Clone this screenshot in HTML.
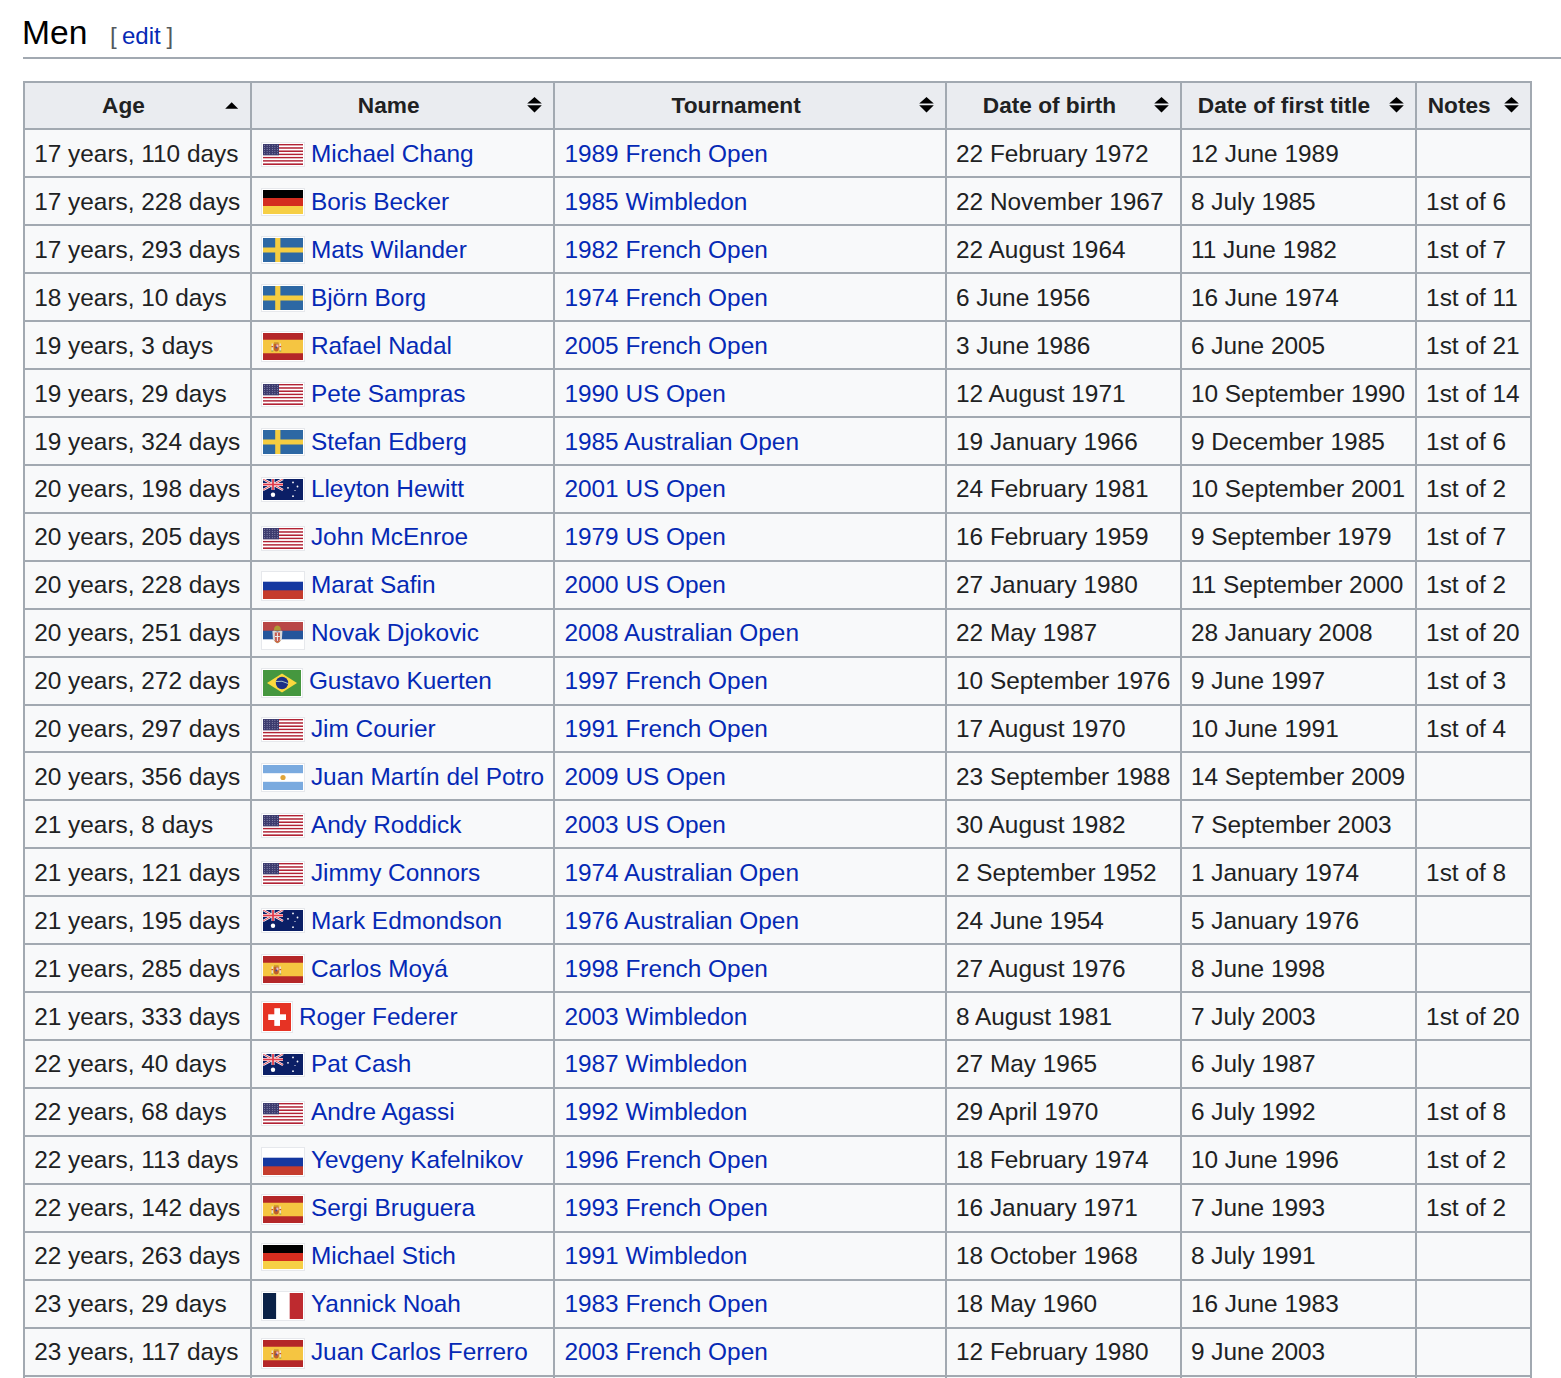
<!DOCTYPE html>
<html><head><meta charset="utf-8"><title>Men</title>
<style>
html,body{margin:0;padding:0;background:#fff;}
body{width:1561px;height:1378px;overflow:hidden;position:relative;-webkit-font-smoothing:antialiased;font-family:"Liberation Sans",sans-serif;color:#202122;}
.a{position:absolute;white-space:nowrap;}
.t{position:absolute;white-space:nowrap;font-size:24.4px;line-height:30px;color:#202122;}
.l{color:#0529b5;}
.h{position:absolute;white-space:nowrap;font-size:22.65px;line-height:30px;font-weight:bold;color:#202122;}
.bd{position:absolute;background:#a2a9b1;}
.fl{position:absolute;box-shadow:0 0 0 1px #fff,0 0 0 2px #e6e8ec;}
.fl svg{display:block;}
</style></head><body>

<div class="a" style="left:22px;top:13px;font-size:33.6px;line-height:40px;color:#000">Men</div>
<div class="a" style="left:110px;top:21px;font-size:24px;line-height:30px;color:#54595d">[</div>
<div class="a" style="left:122px;top:21px;font-size:24px;line-height:30px;color:#0529b5">edit</div>
<div class="a" style="left:166.5px;top:21px;font-size:24px;line-height:30px;color:#54595d">]</div>
<div class="bd" style="left:23px;top:57px;width:1538px;height:2px"></div>
<div class="a" style="left:23px;top:80.5px;width:1508.5px;height:47.5px;background:#eaecf0"></div>
<div class="a" style="left:23px;top:128px;width:1508.5px;height:1250px;background:#f8f9fa"></div>
<div class="bd" style="left:23px;top:80.5px;width:1508.5px;height:2px"></div>
<div class="bd" style="left:23px;top:128.00px;width:1508.5px;height:2px"></div>
<div class="bd" style="left:23px;top:175.96px;width:1508.5px;height:2px"></div>
<div class="bd" style="left:23px;top:223.92px;width:1508.5px;height:2px"></div>
<div class="bd" style="left:23px;top:271.88px;width:1508.5px;height:2px"></div>
<div class="bd" style="left:23px;top:319.84px;width:1508.5px;height:2px"></div>
<div class="bd" style="left:23px;top:367.80px;width:1508.5px;height:2px"></div>
<div class="bd" style="left:23px;top:415.76px;width:1508.5px;height:2px"></div>
<div class="bd" style="left:23px;top:463.72px;width:1508.5px;height:2px"></div>
<div class="bd" style="left:23px;top:511.68px;width:1508.5px;height:2px"></div>
<div class="bd" style="left:23px;top:559.64px;width:1508.5px;height:2px"></div>
<div class="bd" style="left:23px;top:607.60px;width:1508.5px;height:2px"></div>
<div class="bd" style="left:23px;top:655.56px;width:1508.5px;height:2px"></div>
<div class="bd" style="left:23px;top:703.52px;width:1508.5px;height:2px"></div>
<div class="bd" style="left:23px;top:751.48px;width:1508.5px;height:2px"></div>
<div class="bd" style="left:23px;top:799.44px;width:1508.5px;height:2px"></div>
<div class="bd" style="left:23px;top:847.40px;width:1508.5px;height:2px"></div>
<div class="bd" style="left:23px;top:895.36px;width:1508.5px;height:2px"></div>
<div class="bd" style="left:23px;top:943.32px;width:1508.5px;height:2px"></div>
<div class="bd" style="left:23px;top:991.28px;width:1508.5px;height:2px"></div>
<div class="bd" style="left:23px;top:1039.24px;width:1508.5px;height:2px"></div>
<div class="bd" style="left:23px;top:1087.20px;width:1508.5px;height:2px"></div>
<div class="bd" style="left:23px;top:1135.16px;width:1508.5px;height:2px"></div>
<div class="bd" style="left:23px;top:1183.12px;width:1508.5px;height:2px"></div>
<div class="bd" style="left:23px;top:1231.08px;width:1508.5px;height:2px"></div>
<div class="bd" style="left:23px;top:1279.04px;width:1508.5px;height:2px"></div>
<div class="bd" style="left:23px;top:1327.00px;width:1508.5px;height:2px"></div>
<div class="bd" style="left:23px;top:1374.96px;width:1508.5px;height:2px"></div>
<div class="bd" style="left:23px;top:80.5px;width:2px;height:1297.5px"></div>
<div class="bd" style="left:250px;top:80.5px;width:2px;height:1297.5px"></div>
<div class="bd" style="left:553px;top:80.5px;width:2px;height:1297.5px"></div>
<div class="bd" style="left:945px;top:80.5px;width:2px;height:1297.5px"></div>
<div class="bd" style="left:1180px;top:80.5px;width:2px;height:1297.5px"></div>
<div class="bd" style="left:1415px;top:80.5px;width:2px;height:1297.5px"></div>
<div class="bd" style="left:1529.5px;top:80.5px;width:2px;height:1297.5px"></div>
<div class="h" style="left:-76.5px;top:90px;width:400px;text-align:center">Age</div>
<div class="h" style="left:188.7px;top:90px;width:400px;text-align:center">Name</div>
<div class="h" style="left:536.2px;top:90px;width:400px;text-align:center">Tournament</div>
<div class="h" style="left:849.5px;top:90px;width:400px;text-align:center">Date of birth</div>
<div class="h" style="left:1084.0px;top:90px;width:400px;text-align:center">Date of first title</div>
<div class="h" style="left:1259.2px;top:90px;width:400px;text-align:center">Notes</div>
<svg class="a" style="left:224.6px;top:101.5px" width="14" height="7" viewBox="0 0 14 7"><path d="M0.2,6.7 L6.7,0.3 L13.2,6.7z" fill="#000"/></svg>
<svg class="a" style="left:527.0px;top:97px" width="15" height="16" viewBox="0 0 15 16"><path d="M0.2,6.4 L7.5,0.1 L14.8,6.4z M0.2,8.3 L7.5,15.5 L14.8,8.3z" fill="#000"/></svg>
<svg class="a" style="left:919.0px;top:97px" width="15" height="16" viewBox="0 0 15 16"><path d="M0.2,6.4 L7.5,0.1 L14.8,6.4z M0.2,8.3 L7.5,15.5 L14.8,8.3z" fill="#000"/></svg>
<svg class="a" style="left:1154.0px;top:97px" width="15" height="16" viewBox="0 0 15 16"><path d="M0.2,6.4 L7.5,0.1 L14.8,6.4z M0.2,8.3 L7.5,15.5 L14.8,8.3z" fill="#000"/></svg>
<svg class="a" style="left:1389.0px;top:97px" width="15" height="16" viewBox="0 0 15 16"><path d="M0.2,6.4 L7.5,0.1 L14.8,6.4z M0.2,8.3 L7.5,15.5 L14.8,8.3z" fill="#000"/></svg>
<svg class="a" style="left:1503.5px;top:97px" width="15" height="16" viewBox="0 0 15 16"><path d="M0.2,6.4 L7.5,0.1 L14.8,6.4z M0.2,8.3 L7.5,15.5 L14.8,8.3z" fill="#000"/></svg>
<div class="t" style="left:34.2px;top:139.00px">17 years, 110 days</div>
<div class="fl" style="left:263px;top:143.90px;width:40px;height:21px"><svg width="40" height="21" viewBox="0 0 40 21"><rect x="0" y="0.000" width="40" height="1.635" fill="#b22234"/><rect x="0" y="1.615" width="40" height="1.635" fill="#fff"/><rect x="0" y="3.231" width="40" height="1.635" fill="#b22234"/><rect x="0" y="4.846" width="40" height="1.635" fill="#fff"/><rect x="0" y="6.462" width="40" height="1.635" fill="#b22234"/><rect x="0" y="8.077" width="40" height="1.635" fill="#fff"/><rect x="0" y="9.692" width="40" height="1.635" fill="#b22234"/><rect x="0" y="11.308" width="40" height="1.635" fill="#fff"/><rect x="0" y="12.923" width="40" height="1.635" fill="#b22234"/><rect x="0" y="14.538" width="40" height="1.635" fill="#fff"/><rect x="0" y="16.154" width="40" height="1.635" fill="#b22234"/><rect x="0" y="17.769" width="40" height="1.635" fill="#fff"/><rect x="0" y="19.385" width="40" height="1.635" fill="#b22234"/><rect x="0" y="0" width="16" height="11.308" fill="#3c3b6e"/><circle cx="1.50" cy="1.30" r="0.45" fill="#c8c8e0"/><circle cx="4.10" cy="1.30" r="0.45" fill="#c8c8e0"/><circle cx="6.70" cy="1.30" r="0.45" fill="#c8c8e0"/><circle cx="9.30" cy="1.30" r="0.45" fill="#c8c8e0"/><circle cx="11.90" cy="1.30" r="0.45" fill="#c8c8e0"/><circle cx="14.50" cy="1.30" r="0.45" fill="#c8c8e0"/><circle cx="1.50" cy="3.40" r="0.45" fill="#c8c8e0"/><circle cx="4.10" cy="3.40" r="0.45" fill="#c8c8e0"/><circle cx="6.70" cy="3.40" r="0.45" fill="#c8c8e0"/><circle cx="9.30" cy="3.40" r="0.45" fill="#c8c8e0"/><circle cx="11.90" cy="3.40" r="0.45" fill="#c8c8e0"/><circle cx="14.50" cy="3.40" r="0.45" fill="#c8c8e0"/><circle cx="1.50" cy="5.50" r="0.45" fill="#c8c8e0"/><circle cx="4.10" cy="5.50" r="0.45" fill="#c8c8e0"/><circle cx="6.70" cy="5.50" r="0.45" fill="#c8c8e0"/><circle cx="9.30" cy="5.50" r="0.45" fill="#c8c8e0"/><circle cx="11.90" cy="5.50" r="0.45" fill="#c8c8e0"/><circle cx="14.50" cy="5.50" r="0.45" fill="#c8c8e0"/><circle cx="1.50" cy="7.60" r="0.45" fill="#c8c8e0"/><circle cx="4.10" cy="7.60" r="0.45" fill="#c8c8e0"/><circle cx="6.70" cy="7.60" r="0.45" fill="#c8c8e0"/><circle cx="9.30" cy="7.60" r="0.45" fill="#c8c8e0"/><circle cx="11.90" cy="7.60" r="0.45" fill="#c8c8e0"/><circle cx="14.50" cy="7.60" r="0.45" fill="#c8c8e0"/><circle cx="1.50" cy="9.70" r="0.45" fill="#c8c8e0"/><circle cx="4.10" cy="9.70" r="0.45" fill="#c8c8e0"/><circle cx="6.70" cy="9.70" r="0.45" fill="#c8c8e0"/><circle cx="9.30" cy="9.70" r="0.45" fill="#c8c8e0"/><circle cx="11.90" cy="9.70" r="0.45" fill="#c8c8e0"/><circle cx="14.50" cy="9.70" r="0.45" fill="#c8c8e0"/></svg></div>
<div class="t l" style="left:310.9px;top:139.00px">Michael Chang</div>
<div class="t l" style="left:564.4px;top:139.00px">1989 French Open</div>
<div class="t" style="left:956.0px;top:139.00px">22 February 1972</div>
<div class="t" style="left:1190.9px;top:139.00px">12 June 1989</div>
<div class="t" style="left:34.2px;top:186.92px">17 years, 228 days</div>
<div class="fl" style="left:263px;top:190.36px;width:40px;height:24px"><svg width="40" height="24" viewBox="0 0 40 24"><rect width="40" height="24" fill="#f6cf45"/><rect width="40" height="16" fill="#d42d1f"/><rect width="40" height="8" fill="#000"/></svg></div>
<div class="t l" style="left:310.9px;top:186.92px">Boris Becker</div>
<div class="t l" style="left:564.4px;top:186.92px">1985 Wimbledon</div>
<div class="t" style="left:956.0px;top:186.92px">22 November 1967</div>
<div class="t" style="left:1190.9px;top:186.92px">8 July 1985</div>
<div class="t" style="left:1426.1px;top:186.92px">1st of 6</div>
<div class="t" style="left:34.2px;top:234.84px">17 years, 293 days</div>
<div class="fl" style="left:263px;top:238.32px;width:40px;height:24px"><svg width="40" height="24" viewBox="0 0 40 24"><rect width="40" height="24" fill="#2d68a4"/><rect x="12.2" width="5.2" height="24" fill="#f5cd41"/><rect y="9.5" width="40" height="5" fill="#f5cd41"/></svg></div>
<div class="t l" style="left:310.9px;top:234.84px">Mats Wilander</div>
<div class="t l" style="left:564.4px;top:234.84px">1982 French Open</div>
<div class="t" style="left:956.0px;top:234.84px">22 August 1964</div>
<div class="t" style="left:1190.9px;top:234.84px">11 June 1982</div>
<div class="t" style="left:1426.1px;top:234.84px">1st of 7</div>
<div class="t" style="left:34.2px;top:282.76px">18 years, 10 days</div>
<div class="fl" style="left:263px;top:286.28px;width:40px;height:24px"><svg width="40" height="24" viewBox="0 0 40 24"><rect width="40" height="24" fill="#2d68a4"/><rect x="12.2" width="5.2" height="24" fill="#f5cd41"/><rect y="9.5" width="40" height="5" fill="#f5cd41"/></svg></div>
<div class="t l" style="left:310.9px;top:282.76px">Björn Borg</div>
<div class="t l" style="left:564.4px;top:282.76px">1974 French Open</div>
<div class="t" style="left:956.0px;top:282.76px">6 June 1956</div>
<div class="t" style="left:1190.9px;top:282.76px">16 June 1974</div>
<div class="t" style="left:1426.1px;top:282.76px">1st of 11</div>
<div class="t" style="left:34.2px;top:330.68px">19 years, 3 days</div>
<div class="fl" style="left:263px;top:332.74px;width:40px;height:27px"><svg width="40" height="27" viewBox="0 0 40 27"><rect width="40" height="27" fill="#b42628"/><rect y="6.75" width="40" height="13.5" fill="#f5c541"/><rect x="8.6" y="10.5" width="1.4" height="7.5" fill="#e8e0d0"/><rect x="8.3" y="17.5" width="2" height="1" fill="#8a9a40"/><rect x="16.6" y="10.5" width="1.4" height="7.5" fill="#e8e0d0"/><rect x="16.3" y="17.5" width="2" height="1" fill="#8a9a40"/><rect x="8.4" y="13" width="1.8" height="1.2" fill="#c85030"/><rect x="16.4" y="13" width="1.8" height="1.2" fill="#c85030"/><path d="M10.8,10.8 h5 v4.8 q0,3 -2.5,3 q-2.5,0 -2.5,-3z" fill="#c0602a"/><rect x="13.3" y="11.5" width="2.2" height="2.8" fill="#e8b8c8"/><circle cx="13.3" cy="14.6" r="1" fill="#4a4a8a"/><rect x="11" y="9.3" width="4.6" height="1.6" fill="#c89030"/></svg></div>
<div class="t l" style="left:310.9px;top:330.68px">Rafael Nadal</div>
<div class="t l" style="left:564.4px;top:330.68px">2005 French Open</div>
<div class="t" style="left:956.0px;top:330.68px">3 June 1986</div>
<div class="t" style="left:1190.9px;top:330.68px">6 June 2005</div>
<div class="t" style="left:1426.1px;top:330.68px">1st of 21</div>
<div class="t" style="left:34.2px;top:378.60px">19 years, 29 days</div>
<div class="fl" style="left:263px;top:383.70px;width:40px;height:21px"><svg width="40" height="21" viewBox="0 0 40 21"><rect x="0" y="0.000" width="40" height="1.635" fill="#b22234"/><rect x="0" y="1.615" width="40" height="1.635" fill="#fff"/><rect x="0" y="3.231" width="40" height="1.635" fill="#b22234"/><rect x="0" y="4.846" width="40" height="1.635" fill="#fff"/><rect x="0" y="6.462" width="40" height="1.635" fill="#b22234"/><rect x="0" y="8.077" width="40" height="1.635" fill="#fff"/><rect x="0" y="9.692" width="40" height="1.635" fill="#b22234"/><rect x="0" y="11.308" width="40" height="1.635" fill="#fff"/><rect x="0" y="12.923" width="40" height="1.635" fill="#b22234"/><rect x="0" y="14.538" width="40" height="1.635" fill="#fff"/><rect x="0" y="16.154" width="40" height="1.635" fill="#b22234"/><rect x="0" y="17.769" width="40" height="1.635" fill="#fff"/><rect x="0" y="19.385" width="40" height="1.635" fill="#b22234"/><rect x="0" y="0" width="16" height="11.308" fill="#3c3b6e"/><circle cx="1.50" cy="1.30" r="0.45" fill="#c8c8e0"/><circle cx="4.10" cy="1.30" r="0.45" fill="#c8c8e0"/><circle cx="6.70" cy="1.30" r="0.45" fill="#c8c8e0"/><circle cx="9.30" cy="1.30" r="0.45" fill="#c8c8e0"/><circle cx="11.90" cy="1.30" r="0.45" fill="#c8c8e0"/><circle cx="14.50" cy="1.30" r="0.45" fill="#c8c8e0"/><circle cx="1.50" cy="3.40" r="0.45" fill="#c8c8e0"/><circle cx="4.10" cy="3.40" r="0.45" fill="#c8c8e0"/><circle cx="6.70" cy="3.40" r="0.45" fill="#c8c8e0"/><circle cx="9.30" cy="3.40" r="0.45" fill="#c8c8e0"/><circle cx="11.90" cy="3.40" r="0.45" fill="#c8c8e0"/><circle cx="14.50" cy="3.40" r="0.45" fill="#c8c8e0"/><circle cx="1.50" cy="5.50" r="0.45" fill="#c8c8e0"/><circle cx="4.10" cy="5.50" r="0.45" fill="#c8c8e0"/><circle cx="6.70" cy="5.50" r="0.45" fill="#c8c8e0"/><circle cx="9.30" cy="5.50" r="0.45" fill="#c8c8e0"/><circle cx="11.90" cy="5.50" r="0.45" fill="#c8c8e0"/><circle cx="14.50" cy="5.50" r="0.45" fill="#c8c8e0"/><circle cx="1.50" cy="7.60" r="0.45" fill="#c8c8e0"/><circle cx="4.10" cy="7.60" r="0.45" fill="#c8c8e0"/><circle cx="6.70" cy="7.60" r="0.45" fill="#c8c8e0"/><circle cx="9.30" cy="7.60" r="0.45" fill="#c8c8e0"/><circle cx="11.90" cy="7.60" r="0.45" fill="#c8c8e0"/><circle cx="14.50" cy="7.60" r="0.45" fill="#c8c8e0"/><circle cx="1.50" cy="9.70" r="0.45" fill="#c8c8e0"/><circle cx="4.10" cy="9.70" r="0.45" fill="#c8c8e0"/><circle cx="6.70" cy="9.70" r="0.45" fill="#c8c8e0"/><circle cx="9.30" cy="9.70" r="0.45" fill="#c8c8e0"/><circle cx="11.90" cy="9.70" r="0.45" fill="#c8c8e0"/><circle cx="14.50" cy="9.70" r="0.45" fill="#c8c8e0"/></svg></div>
<div class="t l" style="left:310.9px;top:378.60px">Pete Sampras</div>
<div class="t l" style="left:564.4px;top:378.60px">1990 US Open</div>
<div class="t" style="left:956.0px;top:378.60px">12 August 1971</div>
<div class="t" style="left:1190.9px;top:378.60px">10 September 1990</div>
<div class="t" style="left:1426.1px;top:378.60px">1st of 14</div>
<div class="t" style="left:34.2px;top:426.52px">19 years, 324 days</div>
<div class="fl" style="left:263px;top:430.16px;width:40px;height:24px"><svg width="40" height="24" viewBox="0 0 40 24"><rect width="40" height="24" fill="#2d68a4"/><rect x="12.2" width="5.2" height="24" fill="#f5cd41"/><rect y="9.5" width="40" height="5" fill="#f5cd41"/></svg></div>
<div class="t l" style="left:310.9px;top:426.52px">Stefan Edberg</div>
<div class="t l" style="left:564.4px;top:426.52px">1985 Australian Open</div>
<div class="t" style="left:956.0px;top:426.52px">19 January 1966</div>
<div class="t" style="left:1190.9px;top:426.52px">9 December 1985</div>
<div class="t" style="left:1426.1px;top:426.52px">1st of 6</div>
<div class="t" style="left:34.2px;top:474.44px">20 years, 198 days</div>
<div class="fl" style="left:263px;top:478.62px;width:40px;height:21px"><svg width="40" height="21" viewBox="0 0 40 21"><rect width="40" height="21" fill="#0b1f66"/><g><path d="M0,0 L20,11 M20,0 L0,11" stroke="#fff" stroke-width="2.4"/><path d="M0,0 L20,11 M20,0 L0,11" stroke="#e03a4a" stroke-width="0.9"/><rect x="0" y="4" width="20" height="3" fill="#fff"/><rect x="8.5" y="0" width="3" height="11" fill="#fff"/><rect x="0" y="4.6" width="20" height="1.8" fill="#e03a4a"/><rect x="9.1" y="0" width="1.8" height="11" fill="#e03a4a"/></g><circle cx="10" cy="15.8" r="2.2" fill="#fff"/><circle cx="30" cy="3.4" r="0.9" fill="#fff"/><circle cx="25" cy="8.8" r="0.9" fill="#fff"/><circle cx="34.5" cy="7.5" r="0.9" fill="#fff"/><circle cx="32" cy="11.5" r="0.6" fill="#fff"/><circle cx="30" cy="17.2" r="0.9" fill="#fff"/></svg></div>
<div class="t l" style="left:310.9px;top:474.44px">Lleyton Hewitt</div>
<div class="t l" style="left:564.4px;top:474.44px">2001 US Open</div>
<div class="t" style="left:956.0px;top:474.44px">24 February 1981</div>
<div class="t" style="left:1190.9px;top:474.44px">10 September 2001</div>
<div class="t" style="left:1426.1px;top:474.44px">1st of 2</div>
<div class="t" style="left:34.2px;top:522.36px">20 years, 205 days</div>
<div class="fl" style="left:263px;top:527.58px;width:40px;height:21px"><svg width="40" height="21" viewBox="0 0 40 21"><rect x="0" y="0.000" width="40" height="1.635" fill="#b22234"/><rect x="0" y="1.615" width="40" height="1.635" fill="#fff"/><rect x="0" y="3.231" width="40" height="1.635" fill="#b22234"/><rect x="0" y="4.846" width="40" height="1.635" fill="#fff"/><rect x="0" y="6.462" width="40" height="1.635" fill="#b22234"/><rect x="0" y="8.077" width="40" height="1.635" fill="#fff"/><rect x="0" y="9.692" width="40" height="1.635" fill="#b22234"/><rect x="0" y="11.308" width="40" height="1.635" fill="#fff"/><rect x="0" y="12.923" width="40" height="1.635" fill="#b22234"/><rect x="0" y="14.538" width="40" height="1.635" fill="#fff"/><rect x="0" y="16.154" width="40" height="1.635" fill="#b22234"/><rect x="0" y="17.769" width="40" height="1.635" fill="#fff"/><rect x="0" y="19.385" width="40" height="1.635" fill="#b22234"/><rect x="0" y="0" width="16" height="11.308" fill="#3c3b6e"/><circle cx="1.50" cy="1.30" r="0.45" fill="#c8c8e0"/><circle cx="4.10" cy="1.30" r="0.45" fill="#c8c8e0"/><circle cx="6.70" cy="1.30" r="0.45" fill="#c8c8e0"/><circle cx="9.30" cy="1.30" r="0.45" fill="#c8c8e0"/><circle cx="11.90" cy="1.30" r="0.45" fill="#c8c8e0"/><circle cx="14.50" cy="1.30" r="0.45" fill="#c8c8e0"/><circle cx="1.50" cy="3.40" r="0.45" fill="#c8c8e0"/><circle cx="4.10" cy="3.40" r="0.45" fill="#c8c8e0"/><circle cx="6.70" cy="3.40" r="0.45" fill="#c8c8e0"/><circle cx="9.30" cy="3.40" r="0.45" fill="#c8c8e0"/><circle cx="11.90" cy="3.40" r="0.45" fill="#c8c8e0"/><circle cx="14.50" cy="3.40" r="0.45" fill="#c8c8e0"/><circle cx="1.50" cy="5.50" r="0.45" fill="#c8c8e0"/><circle cx="4.10" cy="5.50" r="0.45" fill="#c8c8e0"/><circle cx="6.70" cy="5.50" r="0.45" fill="#c8c8e0"/><circle cx="9.30" cy="5.50" r="0.45" fill="#c8c8e0"/><circle cx="11.90" cy="5.50" r="0.45" fill="#c8c8e0"/><circle cx="14.50" cy="5.50" r="0.45" fill="#c8c8e0"/><circle cx="1.50" cy="7.60" r="0.45" fill="#c8c8e0"/><circle cx="4.10" cy="7.60" r="0.45" fill="#c8c8e0"/><circle cx="6.70" cy="7.60" r="0.45" fill="#c8c8e0"/><circle cx="9.30" cy="7.60" r="0.45" fill="#c8c8e0"/><circle cx="11.90" cy="7.60" r="0.45" fill="#c8c8e0"/><circle cx="14.50" cy="7.60" r="0.45" fill="#c8c8e0"/><circle cx="1.50" cy="9.70" r="0.45" fill="#c8c8e0"/><circle cx="4.10" cy="9.70" r="0.45" fill="#c8c8e0"/><circle cx="6.70" cy="9.70" r="0.45" fill="#c8c8e0"/><circle cx="9.30" cy="9.70" r="0.45" fill="#c8c8e0"/><circle cx="11.90" cy="9.70" r="0.45" fill="#c8c8e0"/><circle cx="14.50" cy="9.70" r="0.45" fill="#c8c8e0"/></svg></div>
<div class="t l" style="left:310.9px;top:522.36px">John McEnroe</div>
<div class="t l" style="left:564.4px;top:522.36px">1979 US Open</div>
<div class="t" style="left:956.0px;top:522.36px">16 February 1959</div>
<div class="t" style="left:1190.9px;top:522.36px">9 September 1979</div>
<div class="t" style="left:1426.1px;top:522.36px">1st of 7</div>
<div class="t" style="left:34.2px;top:570.28px">20 years, 228 days</div>
<div class="fl" style="left:263px;top:573.04px;width:40px;height:26px"><svg width="40" height="26" viewBox="0 0 40 26"><rect width="40" height="26" fill="#c53c2d"/><rect width="40" height="17.3" fill="#1538a0"/><rect width="40" height="8.7" fill="#fff"/></svg></div>
<div class="t l" style="left:310.9px;top:570.28px">Marat Safin</div>
<div class="t l" style="left:564.4px;top:570.28px">2000 US Open</div>
<div class="t" style="left:956.0px;top:570.28px">27 January 1980</div>
<div class="t" style="left:1190.9px;top:570.28px">11 September 2000</div>
<div class="t" style="left:1426.1px;top:570.28px">1st of 2</div>
<div class="t" style="left:34.2px;top:618.20px">20 years, 251 days</div>
<div class="fl" style="left:263px;top:622.00px;width:40px;height:26px"><svg width="40" height="26" viewBox="0 0 40 26"><rect width="40" height="26" fill="#fff"/><rect width="40" height="17.3" fill="#24559b"/><rect width="40" height="8.7" fill="#b94646"/><path d="M11,8.5 q-0.3,-4.5 3.4,-5 q3.7,0.5 3.4,5z" fill="#b09a35"/><path d="M9.4,9 q2,-0.5 5,0.5 q3,-1 5,-0.5 l-0.5,8 q-2,4 -4.5,4.5 q-2.5,-0.5 -4.5,-4.5z" fill="#d8d8d8"/><path d="M11.8,10.5 h5.2 v5.5 q0,4 -2.6,4.8 q-2.6,-0.8 -2.6,-4.8z" fill="#c85a50"/><rect x="13.9" y="11" width="1" height="8" fill="#eee"/><rect x="12" y="14" width="4.8" height="1" fill="#eee"/><path d="M11.5,18.5 q3,4 5.8,0" stroke="#c8783a" stroke-width="1" fill="none"/></svg></div>
<div class="t l" style="left:310.9px;top:618.20px">Novak Djokovic</div>
<div class="t l" style="left:564.4px;top:618.20px">2008 Australian Open</div>
<div class="t" style="left:956.0px;top:618.20px">22 May 1987</div>
<div class="t" style="left:1190.9px;top:618.20px">28 January 2008</div>
<div class="t" style="left:1426.1px;top:618.20px">1st of 20</div>
<div class="t" style="left:34.2px;top:666.12px">20 years, 272 days</div>
<div class="fl" style="left:263px;top:669.96px;width:38px;height:26px"><svg width="38" height="26" viewBox="0 0 38 26"><rect width="38" height="26" fill="#45973f"/><path d="M4,13 L19,3.6 L34,13 L19,22.4z" fill="#fbd93e"/><circle cx="19" cy="13" r="6.2" fill="#1c2f86"/><path d="M13,11.5 q6,-1.5 12,2" stroke="#a9c0c8" stroke-width="1" fill="none"/></svg></div>
<div class="t l" style="left:308.9px;top:666.12px">Gustavo Kuerten</div>
<div class="t l" style="left:564.4px;top:666.12px">1997 French Open</div>
<div class="t" style="left:956.0px;top:666.12px">10 September 1976</div>
<div class="t" style="left:1190.9px;top:666.12px">9 June 1997</div>
<div class="t" style="left:1426.1px;top:666.12px">1st of 3</div>
<div class="t" style="left:34.2px;top:714.04px">20 years, 297 days</div>
<div class="fl" style="left:263px;top:719.42px;width:40px;height:21px"><svg width="40" height="21" viewBox="0 0 40 21"><rect x="0" y="0.000" width="40" height="1.635" fill="#b22234"/><rect x="0" y="1.615" width="40" height="1.635" fill="#fff"/><rect x="0" y="3.231" width="40" height="1.635" fill="#b22234"/><rect x="0" y="4.846" width="40" height="1.635" fill="#fff"/><rect x="0" y="6.462" width="40" height="1.635" fill="#b22234"/><rect x="0" y="8.077" width="40" height="1.635" fill="#fff"/><rect x="0" y="9.692" width="40" height="1.635" fill="#b22234"/><rect x="0" y="11.308" width="40" height="1.635" fill="#fff"/><rect x="0" y="12.923" width="40" height="1.635" fill="#b22234"/><rect x="0" y="14.538" width="40" height="1.635" fill="#fff"/><rect x="0" y="16.154" width="40" height="1.635" fill="#b22234"/><rect x="0" y="17.769" width="40" height="1.635" fill="#fff"/><rect x="0" y="19.385" width="40" height="1.635" fill="#b22234"/><rect x="0" y="0" width="16" height="11.308" fill="#3c3b6e"/><circle cx="1.50" cy="1.30" r="0.45" fill="#c8c8e0"/><circle cx="4.10" cy="1.30" r="0.45" fill="#c8c8e0"/><circle cx="6.70" cy="1.30" r="0.45" fill="#c8c8e0"/><circle cx="9.30" cy="1.30" r="0.45" fill="#c8c8e0"/><circle cx="11.90" cy="1.30" r="0.45" fill="#c8c8e0"/><circle cx="14.50" cy="1.30" r="0.45" fill="#c8c8e0"/><circle cx="1.50" cy="3.40" r="0.45" fill="#c8c8e0"/><circle cx="4.10" cy="3.40" r="0.45" fill="#c8c8e0"/><circle cx="6.70" cy="3.40" r="0.45" fill="#c8c8e0"/><circle cx="9.30" cy="3.40" r="0.45" fill="#c8c8e0"/><circle cx="11.90" cy="3.40" r="0.45" fill="#c8c8e0"/><circle cx="14.50" cy="3.40" r="0.45" fill="#c8c8e0"/><circle cx="1.50" cy="5.50" r="0.45" fill="#c8c8e0"/><circle cx="4.10" cy="5.50" r="0.45" fill="#c8c8e0"/><circle cx="6.70" cy="5.50" r="0.45" fill="#c8c8e0"/><circle cx="9.30" cy="5.50" r="0.45" fill="#c8c8e0"/><circle cx="11.90" cy="5.50" r="0.45" fill="#c8c8e0"/><circle cx="14.50" cy="5.50" r="0.45" fill="#c8c8e0"/><circle cx="1.50" cy="7.60" r="0.45" fill="#c8c8e0"/><circle cx="4.10" cy="7.60" r="0.45" fill="#c8c8e0"/><circle cx="6.70" cy="7.60" r="0.45" fill="#c8c8e0"/><circle cx="9.30" cy="7.60" r="0.45" fill="#c8c8e0"/><circle cx="11.90" cy="7.60" r="0.45" fill="#c8c8e0"/><circle cx="14.50" cy="7.60" r="0.45" fill="#c8c8e0"/><circle cx="1.50" cy="9.70" r="0.45" fill="#c8c8e0"/><circle cx="4.10" cy="9.70" r="0.45" fill="#c8c8e0"/><circle cx="6.70" cy="9.70" r="0.45" fill="#c8c8e0"/><circle cx="9.30" cy="9.70" r="0.45" fill="#c8c8e0"/><circle cx="11.90" cy="9.70" r="0.45" fill="#c8c8e0"/><circle cx="14.50" cy="9.70" r="0.45" fill="#c8c8e0"/></svg></div>
<div class="t l" style="left:310.9px;top:714.04px">Jim Courier</div>
<div class="t l" style="left:564.4px;top:714.04px">1991 French Open</div>
<div class="t" style="left:956.0px;top:714.04px">17 August 1970</div>
<div class="t" style="left:1190.9px;top:714.04px">10 June 1991</div>
<div class="t" style="left:1426.1px;top:714.04px">1st of 4</div>
<div class="t" style="left:34.2px;top:761.96px">20 years, 356 days</div>
<div class="fl" style="left:263px;top:765.38px;width:40px;height:25px"><svg width="40" height="25" viewBox="0 0 40 25"><rect width="40" height="25" fill="#7aaadf"/><rect y="8.2" width="40" height="8.6" fill="#fff"/><circle cx="20" cy="12.5" r="2.6" fill="#e0a53a"/></svg></div>
<div class="t l" style="left:310.9px;top:761.96px">Juan Martín del Potro</div>
<div class="t l" style="left:564.4px;top:761.96px">2009 US Open</div>
<div class="t" style="left:956.0px;top:761.96px">23 September 1988</div>
<div class="t" style="left:1190.9px;top:761.96px">14 September 2009</div>
<div class="t" style="left:34.2px;top:809.88px">21 years, 8 days</div>
<div class="fl" style="left:263px;top:815.34px;width:40px;height:21px"><svg width="40" height="21" viewBox="0 0 40 21"><rect x="0" y="0.000" width="40" height="1.635" fill="#b22234"/><rect x="0" y="1.615" width="40" height="1.635" fill="#fff"/><rect x="0" y="3.231" width="40" height="1.635" fill="#b22234"/><rect x="0" y="4.846" width="40" height="1.635" fill="#fff"/><rect x="0" y="6.462" width="40" height="1.635" fill="#b22234"/><rect x="0" y="8.077" width="40" height="1.635" fill="#fff"/><rect x="0" y="9.692" width="40" height="1.635" fill="#b22234"/><rect x="0" y="11.308" width="40" height="1.635" fill="#fff"/><rect x="0" y="12.923" width="40" height="1.635" fill="#b22234"/><rect x="0" y="14.538" width="40" height="1.635" fill="#fff"/><rect x="0" y="16.154" width="40" height="1.635" fill="#b22234"/><rect x="0" y="17.769" width="40" height="1.635" fill="#fff"/><rect x="0" y="19.385" width="40" height="1.635" fill="#b22234"/><rect x="0" y="0" width="16" height="11.308" fill="#3c3b6e"/><circle cx="1.50" cy="1.30" r="0.45" fill="#c8c8e0"/><circle cx="4.10" cy="1.30" r="0.45" fill="#c8c8e0"/><circle cx="6.70" cy="1.30" r="0.45" fill="#c8c8e0"/><circle cx="9.30" cy="1.30" r="0.45" fill="#c8c8e0"/><circle cx="11.90" cy="1.30" r="0.45" fill="#c8c8e0"/><circle cx="14.50" cy="1.30" r="0.45" fill="#c8c8e0"/><circle cx="1.50" cy="3.40" r="0.45" fill="#c8c8e0"/><circle cx="4.10" cy="3.40" r="0.45" fill="#c8c8e0"/><circle cx="6.70" cy="3.40" r="0.45" fill="#c8c8e0"/><circle cx="9.30" cy="3.40" r="0.45" fill="#c8c8e0"/><circle cx="11.90" cy="3.40" r="0.45" fill="#c8c8e0"/><circle cx="14.50" cy="3.40" r="0.45" fill="#c8c8e0"/><circle cx="1.50" cy="5.50" r="0.45" fill="#c8c8e0"/><circle cx="4.10" cy="5.50" r="0.45" fill="#c8c8e0"/><circle cx="6.70" cy="5.50" r="0.45" fill="#c8c8e0"/><circle cx="9.30" cy="5.50" r="0.45" fill="#c8c8e0"/><circle cx="11.90" cy="5.50" r="0.45" fill="#c8c8e0"/><circle cx="14.50" cy="5.50" r="0.45" fill="#c8c8e0"/><circle cx="1.50" cy="7.60" r="0.45" fill="#c8c8e0"/><circle cx="4.10" cy="7.60" r="0.45" fill="#c8c8e0"/><circle cx="6.70" cy="7.60" r="0.45" fill="#c8c8e0"/><circle cx="9.30" cy="7.60" r="0.45" fill="#c8c8e0"/><circle cx="11.90" cy="7.60" r="0.45" fill="#c8c8e0"/><circle cx="14.50" cy="7.60" r="0.45" fill="#c8c8e0"/><circle cx="1.50" cy="9.70" r="0.45" fill="#c8c8e0"/><circle cx="4.10" cy="9.70" r="0.45" fill="#c8c8e0"/><circle cx="6.70" cy="9.70" r="0.45" fill="#c8c8e0"/><circle cx="9.30" cy="9.70" r="0.45" fill="#c8c8e0"/><circle cx="11.90" cy="9.70" r="0.45" fill="#c8c8e0"/><circle cx="14.50" cy="9.70" r="0.45" fill="#c8c8e0"/></svg></div>
<div class="t l" style="left:310.9px;top:809.88px">Andy Roddick</div>
<div class="t l" style="left:564.4px;top:809.88px">2003 US Open</div>
<div class="t" style="left:956.0px;top:809.88px">30 August 1982</div>
<div class="t" style="left:1190.9px;top:809.88px">7 September 2003</div>
<div class="t" style="left:34.2px;top:857.80px">21 years, 121 days</div>
<div class="fl" style="left:263px;top:863.30px;width:40px;height:21px"><svg width="40" height="21" viewBox="0 0 40 21"><rect x="0" y="0.000" width="40" height="1.635" fill="#b22234"/><rect x="0" y="1.615" width="40" height="1.635" fill="#fff"/><rect x="0" y="3.231" width="40" height="1.635" fill="#b22234"/><rect x="0" y="4.846" width="40" height="1.635" fill="#fff"/><rect x="0" y="6.462" width="40" height="1.635" fill="#b22234"/><rect x="0" y="8.077" width="40" height="1.635" fill="#fff"/><rect x="0" y="9.692" width="40" height="1.635" fill="#b22234"/><rect x="0" y="11.308" width="40" height="1.635" fill="#fff"/><rect x="0" y="12.923" width="40" height="1.635" fill="#b22234"/><rect x="0" y="14.538" width="40" height="1.635" fill="#fff"/><rect x="0" y="16.154" width="40" height="1.635" fill="#b22234"/><rect x="0" y="17.769" width="40" height="1.635" fill="#fff"/><rect x="0" y="19.385" width="40" height="1.635" fill="#b22234"/><rect x="0" y="0" width="16" height="11.308" fill="#3c3b6e"/><circle cx="1.50" cy="1.30" r="0.45" fill="#c8c8e0"/><circle cx="4.10" cy="1.30" r="0.45" fill="#c8c8e0"/><circle cx="6.70" cy="1.30" r="0.45" fill="#c8c8e0"/><circle cx="9.30" cy="1.30" r="0.45" fill="#c8c8e0"/><circle cx="11.90" cy="1.30" r="0.45" fill="#c8c8e0"/><circle cx="14.50" cy="1.30" r="0.45" fill="#c8c8e0"/><circle cx="1.50" cy="3.40" r="0.45" fill="#c8c8e0"/><circle cx="4.10" cy="3.40" r="0.45" fill="#c8c8e0"/><circle cx="6.70" cy="3.40" r="0.45" fill="#c8c8e0"/><circle cx="9.30" cy="3.40" r="0.45" fill="#c8c8e0"/><circle cx="11.90" cy="3.40" r="0.45" fill="#c8c8e0"/><circle cx="14.50" cy="3.40" r="0.45" fill="#c8c8e0"/><circle cx="1.50" cy="5.50" r="0.45" fill="#c8c8e0"/><circle cx="4.10" cy="5.50" r="0.45" fill="#c8c8e0"/><circle cx="6.70" cy="5.50" r="0.45" fill="#c8c8e0"/><circle cx="9.30" cy="5.50" r="0.45" fill="#c8c8e0"/><circle cx="11.90" cy="5.50" r="0.45" fill="#c8c8e0"/><circle cx="14.50" cy="5.50" r="0.45" fill="#c8c8e0"/><circle cx="1.50" cy="7.60" r="0.45" fill="#c8c8e0"/><circle cx="4.10" cy="7.60" r="0.45" fill="#c8c8e0"/><circle cx="6.70" cy="7.60" r="0.45" fill="#c8c8e0"/><circle cx="9.30" cy="7.60" r="0.45" fill="#c8c8e0"/><circle cx="11.90" cy="7.60" r="0.45" fill="#c8c8e0"/><circle cx="14.50" cy="7.60" r="0.45" fill="#c8c8e0"/><circle cx="1.50" cy="9.70" r="0.45" fill="#c8c8e0"/><circle cx="4.10" cy="9.70" r="0.45" fill="#c8c8e0"/><circle cx="6.70" cy="9.70" r="0.45" fill="#c8c8e0"/><circle cx="9.30" cy="9.70" r="0.45" fill="#c8c8e0"/><circle cx="11.90" cy="9.70" r="0.45" fill="#c8c8e0"/><circle cx="14.50" cy="9.70" r="0.45" fill="#c8c8e0"/></svg></div>
<div class="t l" style="left:310.9px;top:857.80px">Jimmy Connors</div>
<div class="t l" style="left:564.4px;top:857.80px">1974 Australian Open</div>
<div class="t" style="left:956.0px;top:857.80px">2 September 1952</div>
<div class="t" style="left:1190.9px;top:857.80px">1 January 1974</div>
<div class="t" style="left:1426.1px;top:857.80px">1st of 8</div>
<div class="t" style="left:34.2px;top:905.72px">21 years, 195 days</div>
<div class="fl" style="left:263px;top:910.26px;width:40px;height:21px"><svg width="40" height="21" viewBox="0 0 40 21"><rect width="40" height="21" fill="#0b1f66"/><g><path d="M0,0 L20,11 M20,0 L0,11" stroke="#fff" stroke-width="2.4"/><path d="M0,0 L20,11 M20,0 L0,11" stroke="#e03a4a" stroke-width="0.9"/><rect x="0" y="4" width="20" height="3" fill="#fff"/><rect x="8.5" y="0" width="3" height="11" fill="#fff"/><rect x="0" y="4.6" width="20" height="1.8" fill="#e03a4a"/><rect x="9.1" y="0" width="1.8" height="11" fill="#e03a4a"/></g><circle cx="10" cy="15.8" r="2.2" fill="#fff"/><circle cx="30" cy="3.4" r="0.9" fill="#fff"/><circle cx="25" cy="8.8" r="0.9" fill="#fff"/><circle cx="34.5" cy="7.5" r="0.9" fill="#fff"/><circle cx="32" cy="11.5" r="0.6" fill="#fff"/><circle cx="30" cy="17.2" r="0.9" fill="#fff"/></svg></div>
<div class="t l" style="left:310.9px;top:905.72px">Mark Edmondson</div>
<div class="t l" style="left:564.4px;top:905.72px">1976 Australian Open</div>
<div class="t" style="left:956.0px;top:905.72px">24 June 1954</div>
<div class="t" style="left:1190.9px;top:905.72px">5 January 1976</div>
<div class="t" style="left:34.2px;top:953.64px">21 years, 285 days</div>
<div class="fl" style="left:263px;top:956.22px;width:40px;height:27px"><svg width="40" height="27" viewBox="0 0 40 27"><rect width="40" height="27" fill="#b42628"/><rect y="6.75" width="40" height="13.5" fill="#f5c541"/><rect x="8.6" y="10.5" width="1.4" height="7.5" fill="#e8e0d0"/><rect x="8.3" y="17.5" width="2" height="1" fill="#8a9a40"/><rect x="16.6" y="10.5" width="1.4" height="7.5" fill="#e8e0d0"/><rect x="16.3" y="17.5" width="2" height="1" fill="#8a9a40"/><rect x="8.4" y="13" width="1.8" height="1.2" fill="#c85030"/><rect x="16.4" y="13" width="1.8" height="1.2" fill="#c85030"/><path d="M10.8,10.8 h5 v4.8 q0,3 -2.5,3 q-2.5,0 -2.5,-3z" fill="#c0602a"/><rect x="13.3" y="11.5" width="2.2" height="2.8" fill="#e8b8c8"/><circle cx="13.3" cy="14.6" r="1" fill="#4a4a8a"/><rect x="11" y="9.3" width="4.6" height="1.6" fill="#c89030"/></svg></div>
<div class="t l" style="left:310.9px;top:953.64px">Carlos Moyá</div>
<div class="t l" style="left:564.4px;top:953.64px">1998 French Open</div>
<div class="t" style="left:956.0px;top:953.64px">27 August 1976</div>
<div class="t" style="left:1190.9px;top:953.64px">8 June 1998</div>
<div class="t" style="left:34.2px;top:1001.56px">21 years, 333 days</div>
<div class="fl" style="left:263px;top:1002.68px;width:28px;height:28px"><svg width="28" height="28" viewBox="0 0 28 28"><rect width="28" height="28" fill="#e63324"/><rect x="5.2" y="11.3" width="17.8" height="5.7" fill="#fff"/><rect x="11.3" y="5.2" width="5.7" height="17.7" fill="#fff"/></svg></div>
<div class="t l" style="left:298.9px;top:1001.56px">Roger Federer</div>
<div class="t l" style="left:564.4px;top:1001.56px">2003 Wimbledon</div>
<div class="t" style="left:956.0px;top:1001.56px">8 August 1981</div>
<div class="t" style="left:1190.9px;top:1001.56px">7 July 2003</div>
<div class="t" style="left:1426.1px;top:1001.56px">1st of 20</div>
<div class="t" style="left:34.2px;top:1049.48px">22 years, 40 days</div>
<div class="fl" style="left:263px;top:1054.14px;width:40px;height:21px"><svg width="40" height="21" viewBox="0 0 40 21"><rect width="40" height="21" fill="#0b1f66"/><g><path d="M0,0 L20,11 M20,0 L0,11" stroke="#fff" stroke-width="2.4"/><path d="M0,0 L20,11 M20,0 L0,11" stroke="#e03a4a" stroke-width="0.9"/><rect x="0" y="4" width="20" height="3" fill="#fff"/><rect x="8.5" y="0" width="3" height="11" fill="#fff"/><rect x="0" y="4.6" width="20" height="1.8" fill="#e03a4a"/><rect x="9.1" y="0" width="1.8" height="11" fill="#e03a4a"/></g><circle cx="10" cy="15.8" r="2.2" fill="#fff"/><circle cx="30" cy="3.4" r="0.9" fill="#fff"/><circle cx="25" cy="8.8" r="0.9" fill="#fff"/><circle cx="34.5" cy="7.5" r="0.9" fill="#fff"/><circle cx="32" cy="11.5" r="0.6" fill="#fff"/><circle cx="30" cy="17.2" r="0.9" fill="#fff"/></svg></div>
<div class="t l" style="left:310.9px;top:1049.48px">Pat Cash</div>
<div class="t l" style="left:564.4px;top:1049.48px">1987 Wimbledon</div>
<div class="t" style="left:956.0px;top:1049.48px">27 May 1965</div>
<div class="t" style="left:1190.9px;top:1049.48px">6 July 1987</div>
<div class="t" style="left:34.2px;top:1097.40px">22 years, 68 days</div>
<div class="fl" style="left:263px;top:1103.10px;width:40px;height:21px"><svg width="40" height="21" viewBox="0 0 40 21"><rect x="0" y="0.000" width="40" height="1.635" fill="#b22234"/><rect x="0" y="1.615" width="40" height="1.635" fill="#fff"/><rect x="0" y="3.231" width="40" height="1.635" fill="#b22234"/><rect x="0" y="4.846" width="40" height="1.635" fill="#fff"/><rect x="0" y="6.462" width="40" height="1.635" fill="#b22234"/><rect x="0" y="8.077" width="40" height="1.635" fill="#fff"/><rect x="0" y="9.692" width="40" height="1.635" fill="#b22234"/><rect x="0" y="11.308" width="40" height="1.635" fill="#fff"/><rect x="0" y="12.923" width="40" height="1.635" fill="#b22234"/><rect x="0" y="14.538" width="40" height="1.635" fill="#fff"/><rect x="0" y="16.154" width="40" height="1.635" fill="#b22234"/><rect x="0" y="17.769" width="40" height="1.635" fill="#fff"/><rect x="0" y="19.385" width="40" height="1.635" fill="#b22234"/><rect x="0" y="0" width="16" height="11.308" fill="#3c3b6e"/><circle cx="1.50" cy="1.30" r="0.45" fill="#c8c8e0"/><circle cx="4.10" cy="1.30" r="0.45" fill="#c8c8e0"/><circle cx="6.70" cy="1.30" r="0.45" fill="#c8c8e0"/><circle cx="9.30" cy="1.30" r="0.45" fill="#c8c8e0"/><circle cx="11.90" cy="1.30" r="0.45" fill="#c8c8e0"/><circle cx="14.50" cy="1.30" r="0.45" fill="#c8c8e0"/><circle cx="1.50" cy="3.40" r="0.45" fill="#c8c8e0"/><circle cx="4.10" cy="3.40" r="0.45" fill="#c8c8e0"/><circle cx="6.70" cy="3.40" r="0.45" fill="#c8c8e0"/><circle cx="9.30" cy="3.40" r="0.45" fill="#c8c8e0"/><circle cx="11.90" cy="3.40" r="0.45" fill="#c8c8e0"/><circle cx="14.50" cy="3.40" r="0.45" fill="#c8c8e0"/><circle cx="1.50" cy="5.50" r="0.45" fill="#c8c8e0"/><circle cx="4.10" cy="5.50" r="0.45" fill="#c8c8e0"/><circle cx="6.70" cy="5.50" r="0.45" fill="#c8c8e0"/><circle cx="9.30" cy="5.50" r="0.45" fill="#c8c8e0"/><circle cx="11.90" cy="5.50" r="0.45" fill="#c8c8e0"/><circle cx="14.50" cy="5.50" r="0.45" fill="#c8c8e0"/><circle cx="1.50" cy="7.60" r="0.45" fill="#c8c8e0"/><circle cx="4.10" cy="7.60" r="0.45" fill="#c8c8e0"/><circle cx="6.70" cy="7.60" r="0.45" fill="#c8c8e0"/><circle cx="9.30" cy="7.60" r="0.45" fill="#c8c8e0"/><circle cx="11.90" cy="7.60" r="0.45" fill="#c8c8e0"/><circle cx="14.50" cy="7.60" r="0.45" fill="#c8c8e0"/><circle cx="1.50" cy="9.70" r="0.45" fill="#c8c8e0"/><circle cx="4.10" cy="9.70" r="0.45" fill="#c8c8e0"/><circle cx="6.70" cy="9.70" r="0.45" fill="#c8c8e0"/><circle cx="9.30" cy="9.70" r="0.45" fill="#c8c8e0"/><circle cx="11.90" cy="9.70" r="0.45" fill="#c8c8e0"/><circle cx="14.50" cy="9.70" r="0.45" fill="#c8c8e0"/></svg></div>
<div class="t l" style="left:310.9px;top:1097.40px">Andre Agassi</div>
<div class="t l" style="left:564.4px;top:1097.40px">1992 Wimbledon</div>
<div class="t" style="left:956.0px;top:1097.40px">29 April 1970</div>
<div class="t" style="left:1190.9px;top:1097.40px">6 July 1992</div>
<div class="t" style="left:1426.1px;top:1097.40px">1st of 8</div>
<div class="t" style="left:34.2px;top:1145.32px">22 years, 113 days</div>
<div class="fl" style="left:263px;top:1148.56px;width:40px;height:26px"><svg width="40" height="26" viewBox="0 0 40 26"><rect width="40" height="26" fill="#c53c2d"/><rect width="40" height="17.3" fill="#1538a0"/><rect width="40" height="8.7" fill="#fff"/></svg></div>
<div class="t l" style="left:310.9px;top:1145.32px">Yevgeny Kafelnikov</div>
<div class="t l" style="left:564.4px;top:1145.32px">1996 French Open</div>
<div class="t" style="left:956.0px;top:1145.32px">18 February 1974</div>
<div class="t" style="left:1190.9px;top:1145.32px">10 June 1996</div>
<div class="t" style="left:1426.1px;top:1145.32px">1st of 2</div>
<div class="t" style="left:34.2px;top:1193.24px">22 years, 142 days</div>
<div class="fl" style="left:263px;top:1196.02px;width:40px;height:27px"><svg width="40" height="27" viewBox="0 0 40 27"><rect width="40" height="27" fill="#b42628"/><rect y="6.75" width="40" height="13.5" fill="#f5c541"/><rect x="8.6" y="10.5" width="1.4" height="7.5" fill="#e8e0d0"/><rect x="8.3" y="17.5" width="2" height="1" fill="#8a9a40"/><rect x="16.6" y="10.5" width="1.4" height="7.5" fill="#e8e0d0"/><rect x="16.3" y="17.5" width="2" height="1" fill="#8a9a40"/><rect x="8.4" y="13" width="1.8" height="1.2" fill="#c85030"/><rect x="16.4" y="13" width="1.8" height="1.2" fill="#c85030"/><path d="M10.8,10.8 h5 v4.8 q0,3 -2.5,3 q-2.5,0 -2.5,-3z" fill="#c0602a"/><rect x="13.3" y="11.5" width="2.2" height="2.8" fill="#e8b8c8"/><circle cx="13.3" cy="14.6" r="1" fill="#4a4a8a"/><rect x="11" y="9.3" width="4.6" height="1.6" fill="#c89030"/></svg></div>
<div class="t l" style="left:310.9px;top:1193.24px">Sergi Bruguera</div>
<div class="t l" style="left:564.4px;top:1193.24px">1993 French Open</div>
<div class="t" style="left:956.0px;top:1193.24px">16 January 1971</div>
<div class="t" style="left:1190.9px;top:1193.24px">7 June 1993</div>
<div class="t" style="left:1426.1px;top:1193.24px">1st of 2</div>
<div class="t" style="left:34.2px;top:1241.16px">22 years, 263 days</div>
<div class="fl" style="left:263px;top:1245.48px;width:40px;height:24px"><svg width="40" height="24" viewBox="0 0 40 24"><rect width="40" height="24" fill="#f6cf45"/><rect width="40" height="16" fill="#d42d1f"/><rect width="40" height="8" fill="#000"/></svg></div>
<div class="t l" style="left:310.9px;top:1241.16px">Michael Stich</div>
<div class="t l" style="left:564.4px;top:1241.16px">1991 Wimbledon</div>
<div class="t" style="left:956.0px;top:1241.16px">18 October 1968</div>
<div class="t" style="left:1190.9px;top:1241.16px">8 July 1991</div>
<div class="t" style="left:34.2px;top:1289.08px">23 years, 29 days</div>
<div class="fl" style="left:263px;top:1293.44px;width:40px;height:26px"><svg width="40" height="26" viewBox="0 0 40 26"><rect width="13.3" height="26" fill="#0a2147"/><rect x="13.3" width="13.4" height="26" fill="#fff"/><rect x="26.7" width="13.3" height="26" fill="#be2a2f"/></svg></div>
<div class="t l" style="left:310.9px;top:1289.08px">Yannick Noah</div>
<div class="t l" style="left:564.4px;top:1289.08px">1983 French Open</div>
<div class="t" style="left:956.0px;top:1289.08px">18 May 1960</div>
<div class="t" style="left:1190.9px;top:1289.08px">16 June 1983</div>
<div class="t" style="left:34.2px;top:1337.00px">23 years, 117 days</div>
<div class="fl" style="left:263px;top:1339.90px;width:40px;height:27px"><svg width="40" height="27" viewBox="0 0 40 27"><rect width="40" height="27" fill="#b42628"/><rect y="6.75" width="40" height="13.5" fill="#f5c541"/><rect x="8.6" y="10.5" width="1.4" height="7.5" fill="#e8e0d0"/><rect x="8.3" y="17.5" width="2" height="1" fill="#8a9a40"/><rect x="16.6" y="10.5" width="1.4" height="7.5" fill="#e8e0d0"/><rect x="16.3" y="17.5" width="2" height="1" fill="#8a9a40"/><rect x="8.4" y="13" width="1.8" height="1.2" fill="#c85030"/><rect x="16.4" y="13" width="1.8" height="1.2" fill="#c85030"/><path d="M10.8,10.8 h5 v4.8 q0,3 -2.5,3 q-2.5,0 -2.5,-3z" fill="#c0602a"/><rect x="13.3" y="11.5" width="2.2" height="2.8" fill="#e8b8c8"/><circle cx="13.3" cy="14.6" r="1" fill="#4a4a8a"/><rect x="11" y="9.3" width="4.6" height="1.6" fill="#c89030"/></svg></div>
<div class="t l" style="left:310.9px;top:1337.00px">Juan Carlos Ferrero</div>
<div class="t l" style="left:564.4px;top:1337.00px">2003 French Open</div>
<div class="t" style="left:956.0px;top:1337.00px">12 February 1980</div>
<div class="t" style="left:1190.9px;top:1337.00px">9 June 2003</div>
</body></html>
